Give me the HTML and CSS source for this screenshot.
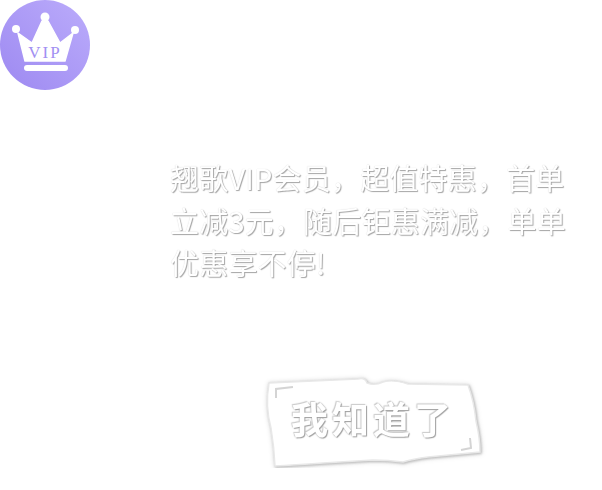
FILE: index.html
```html
<!DOCTYPE html>
<html lang="zh-CN">
<head>
    <meta charset="UTF-8">
    <meta name="viewport" content="width=device-width, initial-scale=1.0">
    <title>VIP</title>
    <link rel="stylesheet" href="styles.css">
</head>
<body>

<div class="badge">
    <svg class="crown" viewBox="0 0 90 90" width="90" height="90">
        <path class="crown-body" d="M18 33 L32 43 L42 21 L48 21 L60 43 L73 33 L65 61 L25 61 Z"/>
        <circle class="crown-ball" cx="16" cy="29" r="4"/>
        <circle class="crown-ball" cx="45" cy="17" r="4.5"/>
        <circle class="crown-ball" cx="75" cy="30" r="4"/>
        <rect class="crown-ball" x="24" y="65" width="44" height="6" rx="3"/>
    </svg>
    <span class="badge-text">VIP</span>
</div>

<p class="message">翘歌VIP会员，超值特惠，首单立减3元，随后钜惠满减，单单优惠享不停!</p>

<div class="confirm">
    <svg class="confirm-shape" viewBox="0 0 220 92" width="220" height="92">
        <path class="confirm-edge" d="M6 7 L50 5 L95 3 Q102 1 104 7 Q112 10 120 6 Q130 3 145 8 L205 9 Q211 25 213 45 Q217 62 217 76 L165 81 Q150 83 140 86 Q125 84 110 84 L60 87 Q30 89 12 90 Q11 70 8 52 Q2 30 6 7 Z"/>
        <path class="confirm-line" d="M13 22 L13 13 L30 11 M198 74 L208 72 L207 62"/>
    </svg>
    <span class="confirm-text">我知道了</span>
</div>

</body>
</html>
```

FILE: styles.css
```css
body {
    margin: 0;
    background-color: #fff;
    font-family: "Noto Sans CJK SC", "Liberation Sans", sans-serif;
}

.badge {
    position: relative;
    width: 90px;
    height: 90px;
    border-radius: 50%;
    background: linear-gradient(225deg, #bbacfb, #9d89f1);
}

.crown {
    display: block;
}

.crown-body {
    fill: #fff;
    stroke: #fff;
    stroke-width: 1.5;
    stroke-linejoin: round;
}

.crown-ball {
    fill: #fff;
}

.badge-text {
    position: absolute;
    top: 44px;
    left: 0;
    width: 90px;
    text-align: center;
    font-family: "Liberation Serif", serif;
    font-size: 17px;
    line-height: 18px;
    letter-spacing: 2px;
    color: #a290f2;
}

.message {
    width: 400px;
    margin: 66px 0 0 170px;
    font-size: 29px;
    line-height: 42.5px;
    letter-spacing: 0.2px;
    color: #fff;
    text-shadow: 1px 1px 1px #a5a5a5, 0 0 1px #d0d0d0;
    transform: translateZ(0);
}

.confirm {
    position: relative;
    display: flex;
    align-items: center;
    justify-content: center;
    width: 220px;
    height: 92px;
    margin: 92px 0 0 263px;
    padding-bottom: 8px;
    box-sizing: border-box;
}

.confirm-shape {
    position: absolute;
    top: 0;
    left: 0;
    overflow: visible;
}

.confirm-edge {
    fill: #fff;
    stroke: #e8e8e8;
    stroke-width: 1.5;
    filter: drop-shadow(1px 1px 1px #bbb) drop-shadow(0 0 2px #ddd);
}

.confirm-line {
    fill: none;
    stroke: #d4d4d4;
    stroke-width: 2;
    filter: blur(0.6px);
}

.confirm-text {
    position: relative;
    font-size: 37px;
    font-weight: 700;
    letter-spacing: 4px;
    color: #fff;
    text-shadow: 1px 1px 1px #a0a0a0, -1px -1px 1px #ccc, 0 0 2px #bbb;
    transform: translateZ(0);
}
```
